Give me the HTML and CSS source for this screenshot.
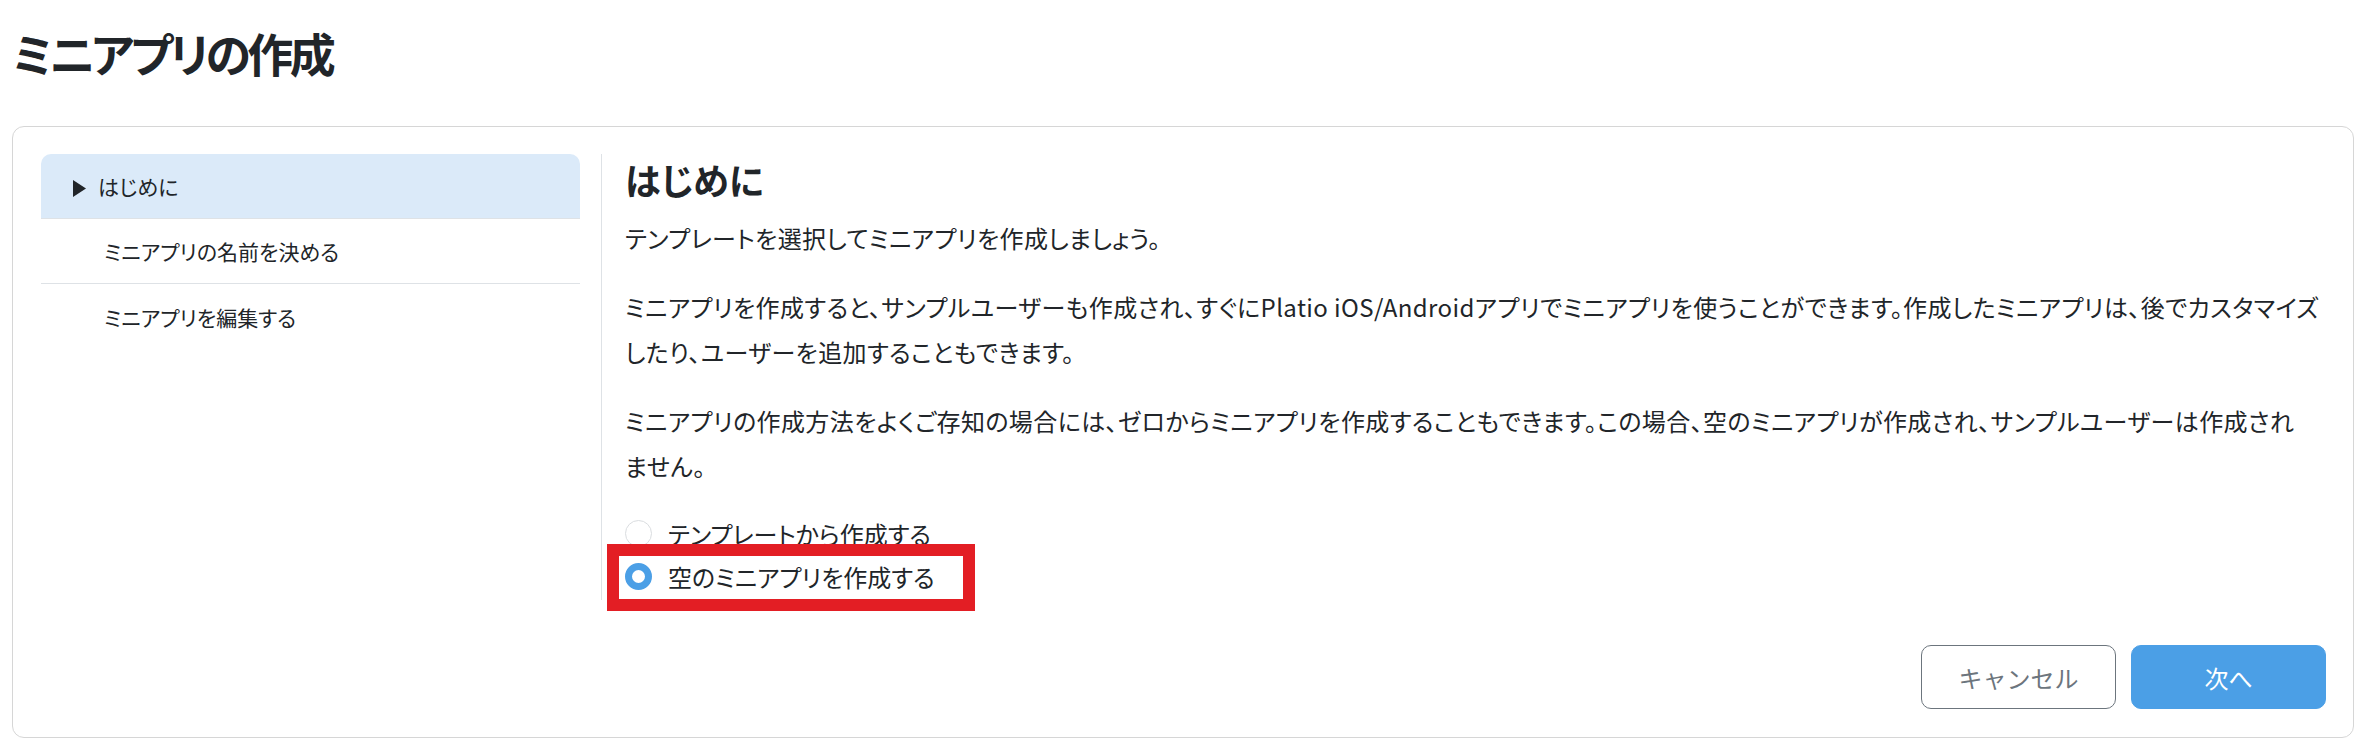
FILE: index.html
```html
<!DOCTYPE html>
<html lang="ja">
    <head>
        <meta charset="UTF-8" />
        <meta name="viewport" content="width=device-width, initial-scale=1.0" />
        <title>ミニアプリの作成</title>
        <link rel="stylesheet" href="styles.css">
    </head>
    <body>
        <h1 class="page-title">ミニアプリの作成</h1>
        <div class="wizard">
            <div class="wizard-body">
                <ul class="steps">
                    <li class="step active">
                        <span class="step-marker">
                            <svg width="13" height="17" viewBox="0 0 13 17"><path d="M0 0 L13 8.5 L0 17 Z" fill="#212529"/></svg>
                        </span>
                        はじめに
                    </li>
                    <li class="step">ミニアプリの名前を決める</li>
                    <li class="step">ミニアプリを編集する</li>
                </ul>
                <section class="step-content">
                    <h2>はじめに</h2>
                    <p>テンプレートを選択してミニアプリを作成しましょう。</p>
                    <p>ミニアプリを作成すると、サンプルユーザーも作成され、すぐにPlatio iOS/Androidアプリでミニアプリを使うことができます。作成したミニアプリは、後でカスタマイズ<br>したり、ユーザーを追加することもできます。</p>
                    <p>ミニアプリの作成方法をよくご存知の場合には、ゼロからミニアプリを作成することもできます。この場合、空のミニアプリが作成され、サンプルユーザーは作成され<br>ません。</p>
                    <div class="radio-group">
                        <label class="radio">
                            <input type="radio" name="mode" value="template" />
                            テンプレートから作成する
                        </label>
                        <label class="radio">
                            <input type="radio" name="mode" value="empty" checked />
                            空のミニアプリを作成する
                            <span class="highlight"></span>
                        </label>
                    </div>
                </section>
            </div>
            <div class="wizard-footer">
                <button class="btn btn-outline">キャンセル</button>
                <button class="btn btn-primary">次へ</button>
            </div>
        </div>
    </body>
</html>
```

FILE: styles.css
```css
:root {
    --text: #212529;
    --muted: #6c757d;
    --line: #dee2e6;
    --primary: #4b9fe6;
    --active-bg: #dbeaf9;
}

body {
    margin: 0;
    padding: 0 8px 0 12px;
    font-family: "Noto Sans CJK JP", "Noto Sans", sans-serif;
    font-feature-settings: "palt";
    color: var(--text);
    background: #ffffff;
}

.page-title {
    margin: 23px 0 45px;
    font-size: 46px;
    line-height: 58px;
    font-weight: 700;
    letter-spacing: -3.5px;
}

.wizard {
    border: 1px solid #d6d6d6;
    border-radius: 12px;
    padding: 27px 27px 28px 28px;
}

.wizard-body {
    display: flex;
    align-items: flex-start;
}

.steps {
    list-style: none;
    margin: 0;
    padding: 0;
    width: 539px;
    flex-shrink: 0;
}

.step {
    display: flex;
    align-items: center;
    height: 65px;
    padding-left: 63px;
    font-size: 21px;
    border-bottom: 1px solid var(--line);
    box-sizing: border-box;
}

.step:last-child {
    border-bottom: none;
}

.step.active {
    padding-left: 32px;
    background-color: var(--active-bg);
    border-radius: 10px 10px 0 0;
}

.step-marker {
    display: flex;
    width: 25px;
    padding-top: 4px;
}

.step-content {
    flex: 1;
    margin-left: 21px;
    padding: 0 0 2px 23px;
    border-left: 1px solid var(--line);
    font-size: 24px;
}

.step-content h2 {
    margin: 4px 0 14px;
    font-size: 36px;
    line-height: 43px;
    font-weight: 700;
}

.step-content p {
    margin: 0 0 24px;
    line-height: 45px;
    letter-spacing: 0.4px;
}

.radio-group {
    display: flex;
    flex-direction: column;
}

.radio {
    position: relative;
    display: flex;
    align-items: center;
    height: 43px;
    gap: 16px;
}

.radio input {
    appearance: none;
    margin: 0;
    width: 27px;
    height: 27px;
    border: 1.5px solid #dadde0;
    border-radius: 50%;
    background: #ffffff;
    box-sizing: border-box;
}

.radio input:checked {
    border: 7.5px solid var(--primary);
    background: #ffffff;
}

.highlight {
    position: absolute;
    left: -18px;
    top: -11px;
    width: 368px;
    height: 67px;
    border: 12px solid #e31e24;
    box-sizing: border-box;
    pointer-events: none;
}

.wizard-footer {
    display: flex;
    justify-content: flex-end;
    gap: 15px;
    margin-top: 45px;
}

.btn {
    width: 195px;
    height: 64px;
    font-family: inherit;
    font-size: 24px;
    border-radius: 10px;
    cursor: pointer;
}

.btn-outline {
    background: #ffffff;
    color: var(--muted);
    border: 1px solid var(--muted);
}

.btn-primary {
    background: var(--primary);
    color: #ffffff;
    border: 1px solid var(--primary);
}
```
